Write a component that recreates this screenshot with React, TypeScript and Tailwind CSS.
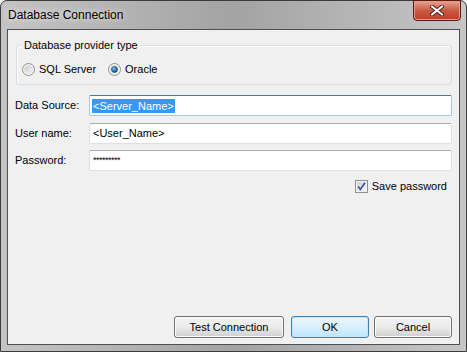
import React from "react";

function Radio({ checked }: { checked?: boolean }) {
  return (
    <svg width="13" height="13" viewBox="0 0 13 13" className="shrink-0">
      <defs>
        <linearGradient id={checked ? "rgc" : "rgu"} x1="0" y1="0" x2="1" y2="1">
          <stop offset="0" stopColor="#c9c9c9" />
          <stop offset="1" stopColor="#f4f4f4" />
        </linearGradient>
        <radialGradient id="dot" cx="0.4" cy="0.35" r="0.7">
          <stop offset="0" stopColor="#8fd1f3" />
          <stop offset="0.5" stopColor="#2a83bd" />
          <stop offset="1" stopColor="#0f3c6b" />
        </radialGradient>
      </defs>
      <circle cx="6.5" cy="6.5" r="6" fill="#f4f4f4" stroke="#8e8f8f" />
      <circle cx="6.5" cy="6.5" r="4.3" fill={`url(#${checked ? "rgc" : "rgu"})`} />
      {checked && <circle cx="6.5" cy="6.5" r="3" fill="url(#dot)" stroke="#1b4f7d" strokeWidth="0.6" />}
    </svg>
  );
}

function Checkbox() {
  return (
    <svg width="13" height="13" viewBox="0 0 13 13" className="shrink-0">
      <defs>
        <linearGradient id="cbg" x1="0" y1="0" x2="1" y2="1">
          <stop offset="0" stopColor="#cbcfd5" />
          <stop offset="1" stopColor="#f6f6f6" />
        </linearGradient>
      </defs>
      <rect x="0.5" y="0.5" width="12" height="12" fill="#f4f4f4" stroke="#8e8f8f" />
      <rect x="2" y="2" width="9" height="9" fill="url(#cbg)" />
      <path d="M3.2 6.6 L5.3 9.4 L10 2.8" fill="none" stroke="#2d4f9a" strokeWidth="1.6" />
    </svg>
  );
}

function Btn({ label, w, def }: { label: string; w: string; def?: boolean }) {
  return (
    <div
      className={`${w} h-[22px] flex items-center justify-center rounded-[3px] border text-[11px] text-black ${
        def
          ? "border-[#3c7fb1] bg-gradient-to-b from-[#eaf6fd] via-[#d9f0fc] to-[#bee6fd] shadow-[inset_0_0_0_1px_#c4e6f8]"
          : "border-[#707070] bg-gradient-to-b from-[#f2f2f2] via-[#ebebeb] to-[#cfcfcf] shadow-[inset_0_0_0_1px_#fcfcfc]"
      }`}
    >
      {label}
    </div>
  );
}

export default function App() {
  return (
    <div className="w-[467px] h-[352px] bg-[#f0f0f0]" style={{ fontFamily: '"Liberation Sans", Arial, sans-serif' }}>
      <div className="relative w-full h-full flex flex-col border border-[#3b3b3b] rounded-t-[7px] bg-gradient-to-r from-[#c4c4c4] via-[#a3a3a3] to-[#c6c6c6]">
        <div className="h-[28px] flex items-center pl-[7px] pb-[1px] shrink-0">
          <span className="text-[12px] text-black [text-shadow:0_0_6px_#ffffff]">Database Connection</span>
        </div>
        <div className="absolute right-[5px] top-[-1px] w-[48px] h-[21px] rounded-b-[4px] border border-[#5a1a12] bg-gradient-to-b from-[#e8a493] via-[#c75a44] to-[#c23b22] shadow-[inset_0_0_0_1px_#e69b8a] flex items-center justify-center">
          <svg width="14" height="11" viewBox="0 0 14 11">
            <path d="M2 1.5 L12 9.5 M12 1.5 L2 9.5" stroke="#4a1d15" strokeWidth="4" strokeLinecap="round" />
            <path d="M2 1.5 L12 9.5 M12 1.5 L2 9.5" stroke="#ffffff" strokeWidth="2.2" strokeLinecap="round" />
          </svg>
        </div>

        <div className="mx-[6px] flex-1 flex flex-col border border-[#4f4f4f] bg-[#f0f0f0] text-[11px] text-black">
          <div className="relative ml-[8px] mr-[7px] mt-[15px] h-[40px] rounded-[3px] border border-[#d5dfe5] shadow-[inset_1px_1px_0_#ffffff]">
            <span className="absolute left-[5px] top-[-8px] px-[2px] bg-[#f0f0f0] leading-[14px]">Database provider type</span>
            <div className="flex items-center mt-[15px] ml-[5px]">
              <Radio />
              <span className="ml-[4px]">SQL Server</span>
              <div className="ml-[12px] flex items-center">
                <Radio checked />
                <span className="ml-[4px]">Oracle</span>
              </div>
            </div>
          </div>

          <div className="flex items-center h-[21px] mt-[10px]">
            <span className="w-[81px] pl-[7px]">Data Source:</span>
            <div className="w-[363px] h-[21px] flex items-center rounded-[2px] border border-[#a4c9e3] border-t-[#3d7bad] bg-white pl-[2px]">
              <span className="bg-[#3399ff] text-white px-px leading-[14px]">&lt;Server_Name&gt;</span>
            </div>
          </div>
          <div className="flex items-center h-[21px] mt-[7px]">
            <span className="w-[81px] pl-[7px]">User name:</span>
            <div className="w-[363px] h-[21px] flex items-center rounded-[2px] border border-[#dbdfe6] border-t-[#abadb3] bg-white pl-[3px]">
              &lt;User_Name&gt;
            </div>
          </div>
          <div className="flex items-center h-[21px] mt-[6px]">
            <span className="w-[81px] pl-[7px]">Password:</span>
            <div className="w-[363px] h-[21px] flex items-center rounded-[2px] border border-[#dbdfe6] border-t-[#abadb3] bg-white pl-[3px] text-[9px] tracking-[-0.5px]">
              *********
            </div>
          </div>

          <div className="flex items-center justify-end mt-[7px] pr-[12px]">
            <Checkbox />
            <span className="ml-[4px]">Save password</span>
          </div>

          <div className="mt-auto mb-[6px] flex justify-end pr-[7px]">
            <Btn label="Test Connection" w="w-[110px]" />
            <div className="ml-[7px]">
              <Btn label="OK" w="w-[78px]" def />
            </div>
            <div className="ml-[5px]">
              <Btn label="Cancel" w="w-[78px]" />
            </div>
          </div>
        </div>
        <div className="h-[6px] shrink-0" />
      </div>
    </div>
  );
}
